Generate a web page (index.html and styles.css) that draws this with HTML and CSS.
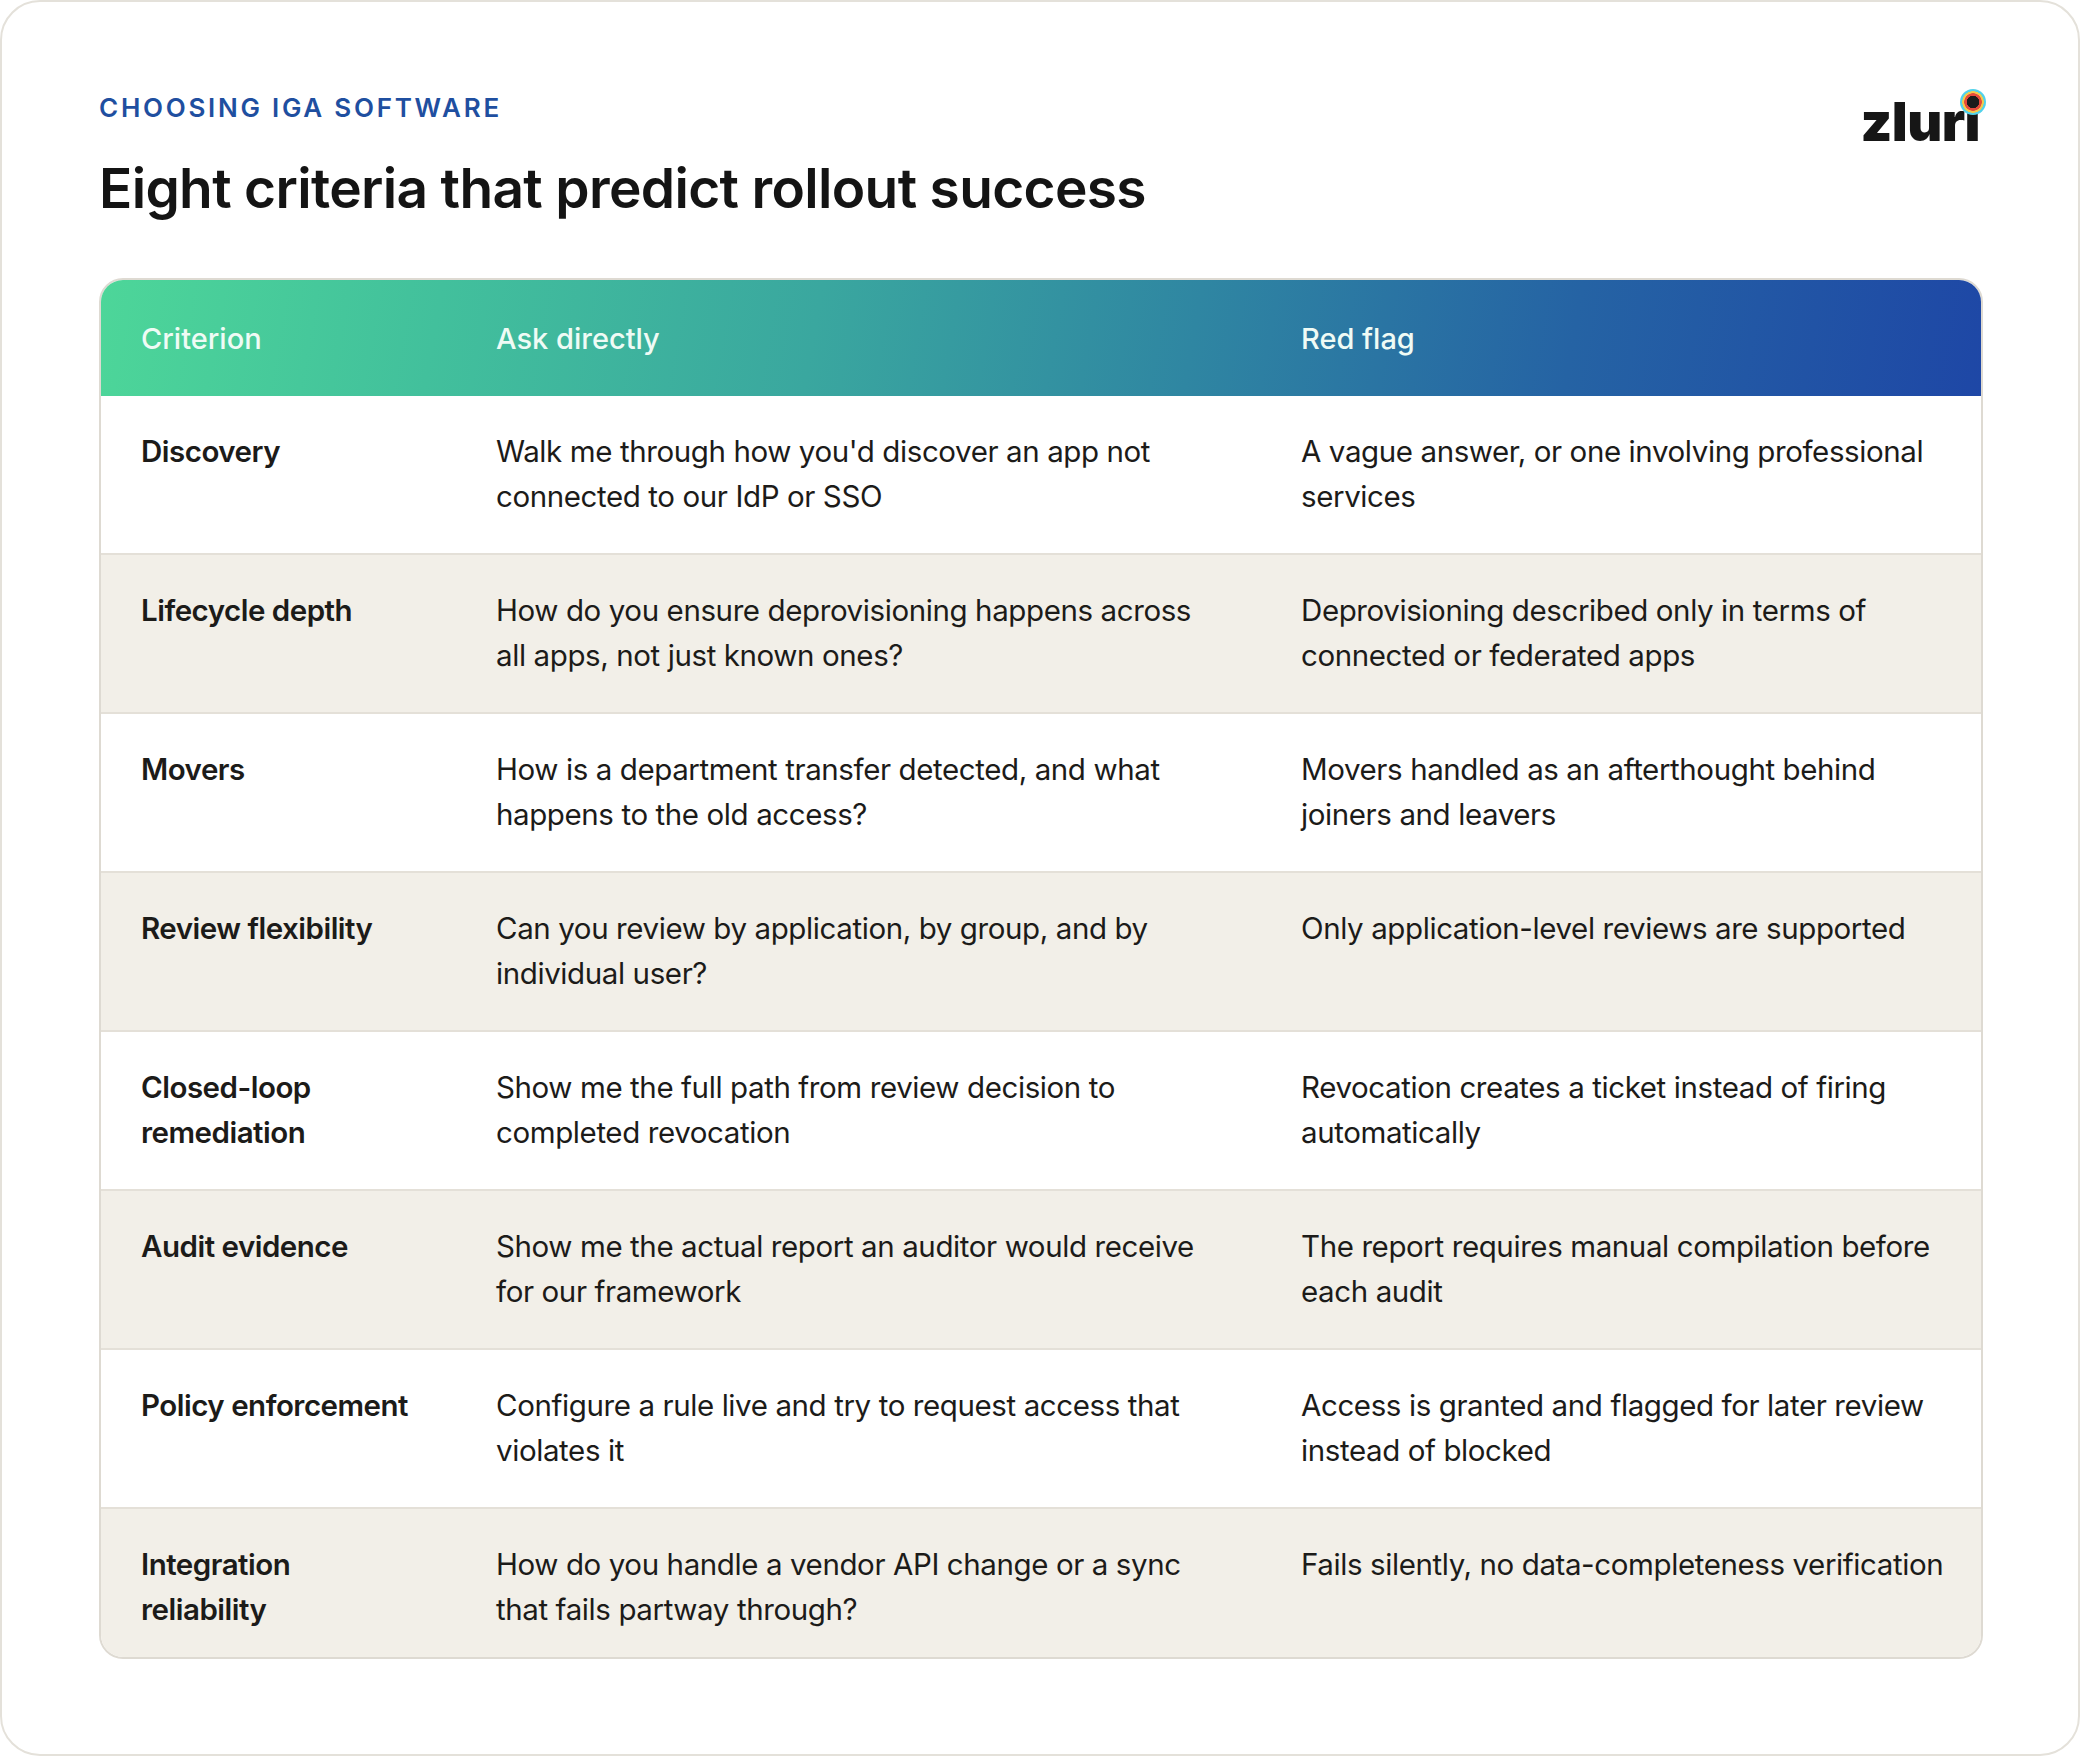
FILE: index.html
```html
<!DOCTYPE html>
<html lang="en">
<head>
<meta charset="utf-8">
<title>Eight criteria that predict rollout success</title>
<link rel="stylesheet" href="styles.css">
</head>
<body>
<div class="frame">
  <header class="top">
    <div class="heading">
      <div class="eyebrow">CHOOSING IGA SOFTWARE</div>
      <h1 class="title">Eight criteria that predict rollout success</h1>
    </div>
    <div class="logo">zlur<span class="logo-i">ı</span></div>
  </header>

  <div class="table">
    <div class="row head">
      <div class="cell c1">Criterion</div>
      <div class="cell c2">Ask directly</div>
      <div class="cell c3">Red flag</div>
    </div>
    <div class="row">
      <div class="cell c1 name">Discovery</div>
      <div class="cell c2">Walk me through how you'd discover an app not connected to our IdP or SSO</div>
      <div class="cell c3">A vague answer, or one involving professional services</div>
    </div>
    <div class="row alt">
      <div class="cell c1 name">Lifecycle depth</div>
      <div class="cell c2">How do you ensure deprovisioning happens across all apps, not just known ones?</div>
      <div class="cell c3">Deprovisioning described only in terms of connected or federated apps</div>
    </div>
    <div class="row">
      <div class="cell c1 name">Movers</div>
      <div class="cell c2">How is a department transfer detected, and what happens to the old access?</div>
      <div class="cell c3">Movers handled as an afterthought behind joiners and leavers</div>
    </div>
    <div class="row alt">
      <div class="cell c1 name">Review flexibility</div>
      <div class="cell c2">Can you review by application, by group, and by individual user?</div>
      <div class="cell c3">Only application-level reviews are supported</div>
    </div>
    <div class="row">
      <div class="cell c1 name">Closed-loop remediation</div>
      <div class="cell c2">Show me the full path from review decision to completed revocation</div>
      <div class="cell c3">Revocation creates a ticket instead of firing automatically</div>
    </div>
    <div class="row alt">
      <div class="cell c1 name">Audit evidence</div>
      <div class="cell c2">Show me the actual report an auditor would receive for our framework</div>
      <div class="cell c3">The report requires manual compilation before each audit</div>
    </div>
    <div class="row">
      <div class="cell c1 name">Policy enforcement</div>
      <div class="cell c2">Configure a rule live and try to request access that violates it</div>
      <div class="cell c3">Access is granted and flagged for later review instead of blocked</div>
    </div>
    <div class="row alt last">
      <div class="cell c1 name">Integration reliability</div>
      <div class="cell c2">How do you handle a vendor API change or a sync that fails partway through?</div>
      <div class="cell c3">Fails silently, no data-completeness verification</div>
    </div>
  </div>
</div>
</body>
</html>
```

FILE: styles.css
```css
* { box-sizing: border-box; }

html, body {
  margin: 0;
  padding: 0;
  background: #ffffff;
}

body {
  font-family: "Inter", "Noto Sans", "Liberation Sans", sans-serif;
  color: #1c1b19;
}

.frame {
  width: 2080px;
  height: 1756px;
  border: 2px solid #e4e1da;
  border-radius: 40px;
  padding: 90px 95px 0 97px;
  background: #ffffff;
}

.top {
  display: flex;
  justify-content: space-between;
  align-items: flex-start;
}

.eyebrow {
  font-size: 26px;
  line-height: 32px;
  font-weight: 600;
  letter-spacing: 0.105em;
  color: #1f4fa0;
}

.title {
  margin: 31px 0 0 0;
  font-size: 55px;
  line-height: 66px;
  font-weight: 600;
  letter-spacing: -0.012em;
  color: #141414;
}

.logo {
  margin-top: 3px;
  margin-right: 3px;
  font-size: 54px;
  line-height: 53px;
  font-weight: 900;
  letter-spacing: -0.01em;
  color: #161616;
}

.logo-i {
  position: relative;
}

.logo-i::after {
  content: "";
  position: absolute;
  left: 50%;
  top: 0;
  width: 26px;
  height: 26px;
  margin-left: -12px;
  border-radius: 50%;
  background: radial-gradient(circle, #1b1b1b 0 6px, #e64a3b 6.5px 8.5px, #f2c94c 9px 10.5px, #52d2ea 11px 13px);
}

.table {
  margin-top: 57px;
  border: 2px solid #dedad2;
  border-radius: 24px;
  overflow: hidden;
  background: #ffffff;
}

.row {
  display: grid;
  grid-template-columns: 355px 805px 1fr;
  border-bottom: 2px solid #e4e0d8;
}

.row.alt {
  background: #f2efe8;
}

.row.last {
  border-bottom: none;
}

.cell {
  padding: 33px 40px 34px 40px;
  font-size: 29.5px;
  line-height: 45px;
  font-weight: 400;
  letter-spacing: -0.4px;
}

.row.last .cell {
  padding-bottom: 25px;
}

.cell.c1 { padding-right: 42px; }
.cell.c3 { padding-right: 25px; }

.cell.name {
  font-weight: 600;
  letter-spacing: -0.5px;
}

.row.head {
  height: 116px;
  border-bottom: none;
  background: linear-gradient(100deg, #4dd699 0%, #42c09c 18%, #3aa79f 38%, #2f86a2 58%, #2563a4 78%, #1e47a6 100%);
}

.row.head .cell {
  display: flex;
  align-items: center;
  padding-top: 0;
  padding-bottom: 0;
  font-size: 29px;
  font-weight: 500;
  letter-spacing: 0;
  color: #effbf5;
}
```
